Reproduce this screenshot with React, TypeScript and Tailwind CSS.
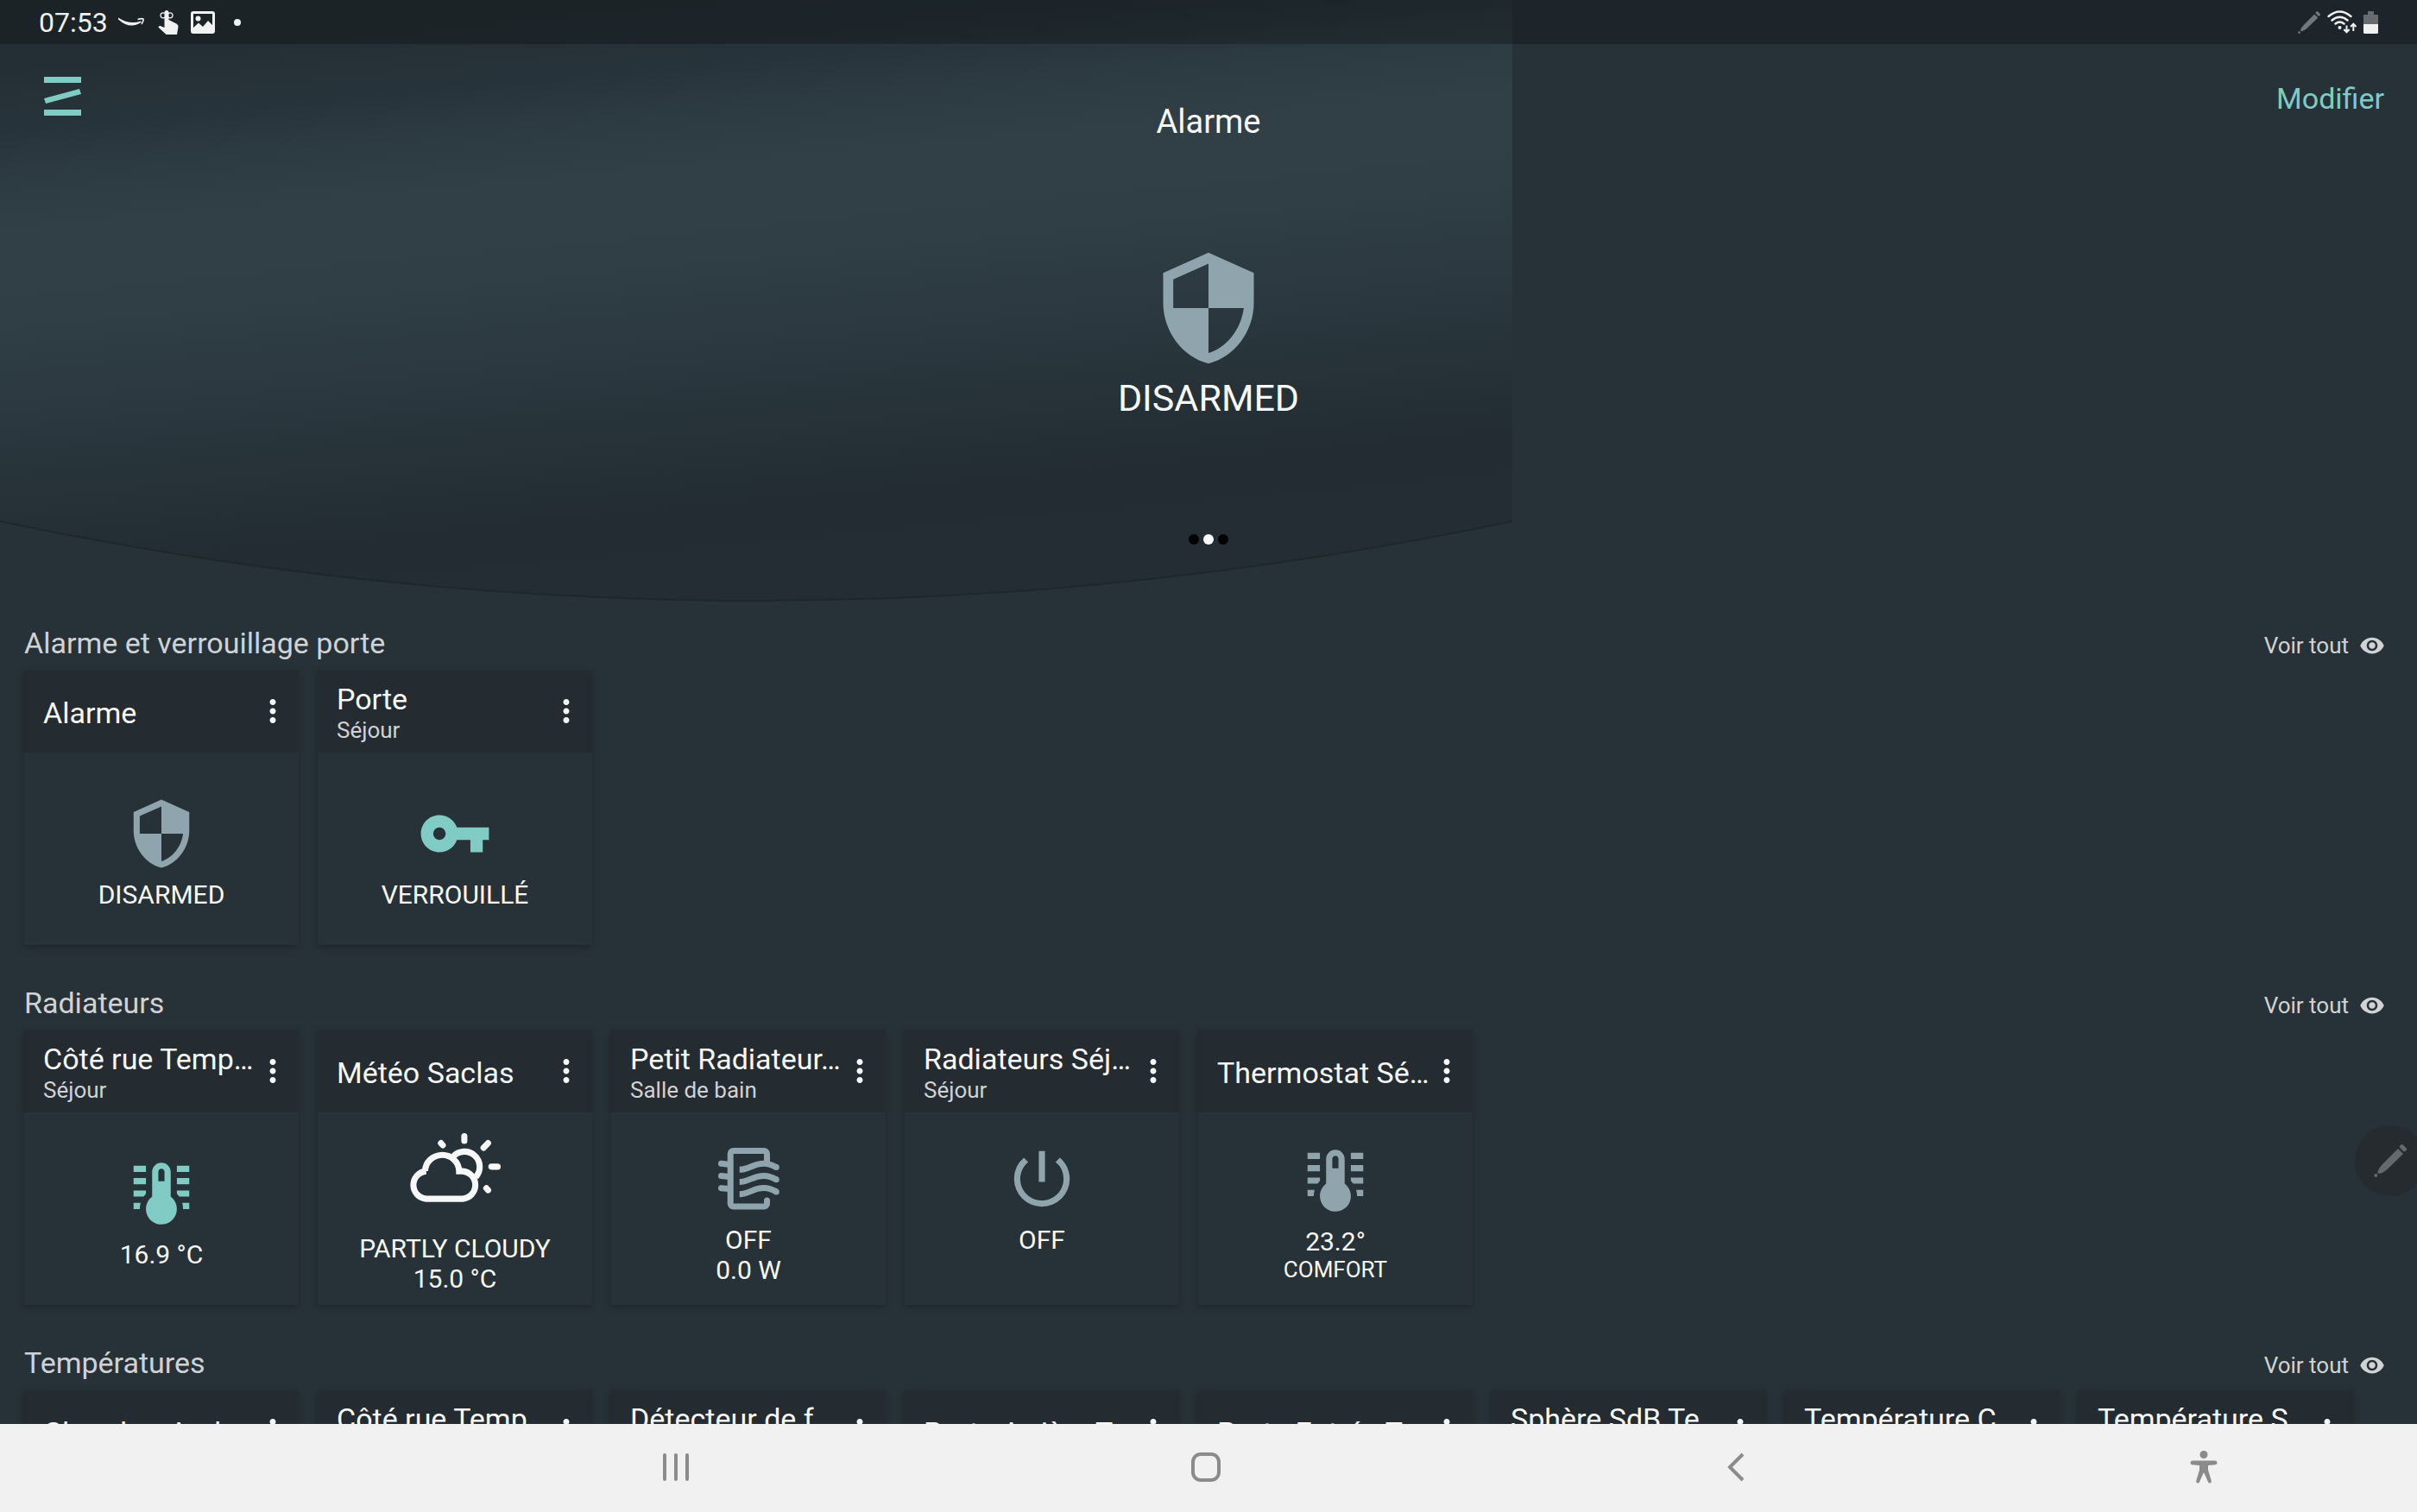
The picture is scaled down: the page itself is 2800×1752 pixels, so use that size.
import type { ReactNode } from "react";
import {
  MdMoreVert,
  MdPowerSettingsNew,
  MdSecurity,
  MdVisibility,
  MdVpnKey,
} from "react-icons/md";

type Tile = {
  title: string;
  room?: string;
  icon?: ReactNode;
  lines?: string[];
  note?: string;
};

type Group = { name: string; tiles: Tile[] };

function ThermometerLines({ className }: { className: string }) {
  return (
    <svg viewBox="0 0 24 24" fill="currentColor" className={className} aria-hidden="true">
      <path d="M17 3H21V5H17V3M17 7H21V9H17V7M17 11H21V13H17.75L17 12.1V11M21 15V17H19C19 16.31 18.9 15.63 18.71 15H21M7 3V5H3V3H7M7 7V9H3V7H7M7 11V12.1L6.25 13H3V11H7M3 15H5.29C5.1 15.63 5 16.31 5 17H3V15M15 13V5C15 3.34 13.66 2 12 2S9 3.34 9 5V13C6.79 14.66 6.34 17.79 8 20S12.79 22.66 15 21 17.66 16.21 16 14C15.72 13.62 15.38 13.28 15 13M12 4C12.55 4 13 4.45 13 5V8H11V5C11 4.45 11.45 4 12 4Z" />
    </svg>
  );
}

function PartlyCloudy() {
  return (
    <svg
      viewBox="0 2 105 105"
      fill="none"
      stroke="currentColor"
      strokeWidth="7"
      className="size-[106px] text-[#f7f8f8]"
      aria-hidden="true"
    >
      <path d="M19.5 77.4A15.9 15.9 0 0 1 19.5 45.7L18.3 45.7A19.5 18.6 0 0 1 57.3 45.7L61.3 45.7A15.9 15.9 0 0 1 61.3 77.4Z" />
      <path d="M50.4 29A17.4 17.4 0 0 1 76.5 52.3" />
      <path
        strokeLinecap="round"
        d="M63.3 5.5V11M36.5 13.5L38.6 15.9M90.5 13.5L85.4 18.8M94.3 40.5H101.5M88.6 65.2L90.6 67.5"
      />
    </svg>
  );
}

function Heater() {
  return (
    <svg
      viewBox="0 0 86 86"
      fill="none"
      stroke="currentColor"
      strokeWidth="7"
      className="size-[86px] text-[#90a4ae]"
      aria-hidden="true"
    >
      <path d="M64.5 23V14A3.5 3.5 0 0 0 61 10.5H25.7A3.5 3.5 0 0 0 22.2 14V71.5A3.5 3.5 0 0 0 25.7 75H61A3.5 3.5 0 0 0 64.5 71.5V67" />
      <path strokeLinecap="round" d="M64.5 68V71M11.5 25.3L20 26.2M11.5 39.5L20 40.4M11.5 53.7L20 54.6" />
      {[0, 14.2, 28.4].map((dy) => (
        <g key={dy} transform={`translate(0 ${dy})`}>
          <path d="M32.7 32.3C44 32.3 48 25.2 61 25.2C67 25.2 71 27 75.3 29.5" />
          <circle cx="75.3" cy="29.5" r="3.5" fill="currentColor" stroke="none" />
        </g>
      ))}
    </svg>
  );
}

function Pen({ className }: { className: string }) {
  return (
    <svg viewBox="0 0 38 38" fill="currentColor" className={className} aria-hidden="true">
      <path d="M28 5L34 11L16 28.5Q11 33 6.5 34Q4 34 4.5 31.5Q6 27 10.5 22.5Z" />
      <rect x="29.5" y="1.8" width="9" height="4.8" rx="2" transform="rotate(45 34 4.2)" />
      <circle cx="2.3" cy="36" r="2" />
    </svg>
  );
}

const groups: Group[] = [
  {
    name: "Alarme et verrouillage porte",
    tiles: [
      {
        title: "Alarme",
        icon: <MdSecurity className="size-[86px] text-[#90a4ae]" />,
        lines: ["DISARMED"],
      },
      {
        title: "Porte",
        room: "Séjour",
        icon: <MdVpnKey className="size-[86px] text-[#80cbc4]" />,
        lines: ["VERROUILLÉ"],
      },
    ],
  },
  {
    name: "Radiateurs",
    tiles: [
      {
        title: "Côté rue Temp…",
        room: "Séjour",
        icon: <ThermometerLines className="size-[86px] text-[#80cbc4]" />,
        lines: ["16.9 °C"],
      },
      { title: "Météo Saclas", icon: <PartlyCloudy />, lines: ["PARTLY CLOUDY", "15.0 °C"] },
      { title: "Petit Radiateur…", room: "Salle de bain", icon: <Heater />, lines: ["OFF", "0.0 W"] },
      {
        title: "Radiateurs Séj…",
        room: "Séjour",
        icon: <MdPowerSettingsNew className="size-[86px] text-[#90a4ae]" />,
        lines: ["OFF", ""],
      },
      {
        title: "Thermostat Sé…",
        icon: <ThermometerLines className="size-[86px] text-[#90a4ae]" />,
        lines: ["23.2°"],
        note: "COMFORT",
      },
    ],
  },
  {
    name: "Températures",
    tiles: [
      { title: "Chambre And…" },
      { title: "Côté rue Temp…", room: "Séjour" },
      { title: "Détecteur de f…", room: "Séjour" },
      { title: "Porte Arrière T…" },
      { title: "Porte Entrée T…" },
      { title: "Sphère SdB Te…", room: "Salle de bain" },
      { title: "Température C…", room: "Séjour" },
      { title: "Température S…", room: "Séjour" },
    ],
  },
];

function TileCard({ tile }: { tile: Tile }) {
  return (
    <article className="flex h-[319px] w-[318px] shrink-0 flex-col bg-[#273238] shadow-[-1px_3px_8px_rgba(0,0,0,0.25)]">
      <header className="flex h-24 shrink-0 items-center justify-between bg-[#242b31] pr-[9px] pl-[22px]">
        <div className="min-w-0 pt-1">
          <h3 className="text-[34px] leading-[40px] whitespace-nowrap">{tile.title}</h3>
          {tile.room && (
            <p className="text-[26px] leading-[32px] whitespace-nowrap text-[#d0d2d4]">{tile.room}</p>
          )}
        </div>
        <button type="button" aria-label={`Options ${tile.title}`} className="shrink-0">
          <MdMoreVert className="size-[42px]" />
        </button>
      </header>
      <div className="flex flex-1 flex-col items-center justify-center pt-[10px]">
        {tile.icon}
        <div className="mt-[10px] text-center text-[30px] leading-[35px]">
          {tile.lines?.map((line, i) => (
            <p key={i} className="min-h-[35px]">
              {line}
            </p>
          ))}
          {tile.note && <p className="text-[26px] leading-[31px]">{tile.note}</p>}
        </div>
      </div>
    </article>
  );
}

function GroupSection({ group }: { group: Group }) {
  return (
    <section>
      <div className="flex h-[98px] items-end pr-[37px] pb-[10px] pl-7 text-[#d0d2d4]">
        <div className="flex flex-1 items-baseline justify-between">
          <h2 className="text-[34px] leading-[42px]">{group.name}</h2>
          <a href="#" className="flex items-center gap-3 text-[26px] leading-[30px]">
            Voir tout
            <MdVisibility className="size-[30px]" />
          </a>
        </div>
      </div>
      <div className="flex gap-[22px] pl-7">
        {group.tiles.map((tile) => (
          <TileCard key={tile.title} tile={tile} />
        ))}
      </div>
    </section>
  );
}

function HeroBackdrop() {
  return (
    <svg viewBox="0 0 1752 700" className="absolute top-0 left-0 w-[1752px]" aria-hidden="true">
      <defs>
        <linearGradient id="sheen" gradientUnits="userSpaceOnUse" x1="876" y1="0" x2="936" y2="640">
          <stop offset="0" stopColor="#242f35" />
          <stop offset="0.1" stopColor="#27333a" />
          <stop offset="0.2" stopColor="#2d3b42" />
          <stop offset="0.3" stopColor="#313f46" />
          <stop offset="0.45" stopColor="#303e45" />
          <stop offset="0.65" stopColor="#2a373e" />
          <stop offset="0.77" stopColor="#263238" />
          <stop offset="0.92" stopColor="#222c32" />
          <stop offset="1" stopColor="#232d33" />
        </linearGradient>
      </defs>
      <path d="M0 0H1752V604Q876 788 0 604Z" fill="url(#sheen)" />
      <path d="M0 604Q876 788 1752 604" fill="none" stroke="#1e272c" strokeWidth="2" />
    </svg>
  );
}

function StatusBar() {
  return (
    <div className="absolute inset-x-0 top-0 flex h-[51px] items-center justify-between bg-black/25 px-[45px] text-[#f1f1f1]">
      <div className="flex items-center">
        <time className="text-[32px] leading-[38px]">07:53</time>
        <svg viewBox="0 0 30 12" fill="currentColor" className="ml-3 h-3 w-[30px]" aria-hidden="true">
          <path d="M0 0.5Q13 9 26 4.5L27 5.5Q14 15 0 2.5Z" />
          <path d="M22.5 2.5Q27 1 29 2Q29.5 4.5 27 8" fill="none" stroke="currentColor" strokeWidth="1.6" />
        </svg>
        <svg viewBox="0 0 24 28" fill="currentColor" className="ml-4 h-7 w-6" aria-hidden="true">
          <path d="M7.5 2.5A2.5 2.5 0 0 1 12.5 2.5V11L21.5 15.5Q24 17 23.5 19L22 28H9.5L0.3 19.5L2 17.8L7.5 20Z" />
          <circle cx="6" cy="5.8" r="3" fill="none" stroke="currentColor" strokeWidth="1.3" />
          <circle cx="14" cy="5.8" r="3" fill="none" stroke="currentColor" strokeWidth="1.3" />
        </svg>
        <svg viewBox="0 0 28 26" className="ml-[14px] h-[26px] w-7" aria-hidden="true">
          <rect x="1.5" y="1.5" width="25" height="23" rx="1.5" fill="none" stroke="currentColor" strokeWidth="3" />
          <circle cx="8.5" cy="8.5" r="3" fill="currentColor" />
          <path d="M2 20L9 13.5L14 18L20 11L26 17V25H2Z" fill="currentColor" />
        </svg>
        <span className="ml-[22px] size-2 rounded-full bg-[#f1f1f1]" />
      </div>
      <div className="flex items-center">
        <Pen className="size-[26px] text-[#737779]" />
        <svg viewBox="0 0 34 27" fill="none" stroke="currentColor" className="ml-2 h-[27px] w-[34px]" aria-hidden="true">
          <path d="M1.5 7Q14.5 -4 27.5 7M5.5 11.5Q14.5 4 23.5 11.5M9.5 15.5Q14.5 11.5 19.5 15.5" strokeWidth="2.4" strokeLinecap="round" />
          <circle cx="14.5" cy="20" r="2" fill="currentColor" stroke="none" />
          <path d="M22.5 17.5V25M19.3 22L22.5 25.3L25.7 22M30.3 24V16M27.1 19L30.3 15.7L33.5 19" strokeWidth="2" />
        </svg>
        <svg viewBox="0 0 17 26" className="ml-2 h-[26px] w-[17px]" aria-hidden="true">
          <path d="M5 0H12V4H17V15H0V4H5Z" fill="#686c6e" />
          <path d="M0 15H17V24.5Q17 26 15.5 26H1.5Q0 26 0 24.5Z" fill="currentColor" />
        </svg>
      </div>
    </div>
  );
}

function Hero() {
  return (
    <div className="relative grid h-[678px] grid-cols-3 items-start pt-[51px]">
      <button type="button" aria-label="Menu" className="mt-[38px] ml-[51px] justify-self-start">
        <svg viewBox="0 0 43 45" fill="#80cbc4" className="h-[45px] w-[43px]">
          <path d="M0 0H43V7H0ZM0 38H43V45H0ZM0 25L41 14L43 20L2 31Z" />
        </svg>
      </button>
      <div className="mt-[67px] flex flex-col items-center">
        <h1 className="text-[38px] leading-[46px]">Alarme</h1>
        <MdSecurity className="mt-[123px] size-[140px] text-[#90a4ae]" />
        <p className="mt-2 text-[43px] leading-[52px]">DISARMED</p>
        <div className="mt-[132px] flex gap-[5px]">
          <span className="size-3 rounded-full bg-black" />
          <span className="size-3 rounded-full bg-white" />
          <span className="size-3 rounded-full bg-black" />
        </div>
      </div>
      <a href="#" className="mt-[42px] mr-[38px] justify-self-end text-[34px] leading-[42px] text-[#80cbc4]">
        Modifier
      </a>
    </div>
  );
}

function NavBar() {
  return (
    <nav className="grid h-[102px] shrink-0 grid-cols-[476fr_614fr_614fr_614fr_470fr_12fr] items-center justify-items-center bg-[#f1f1f1] pb-0.5 text-[#8b8b8b]">
      <span />
      <button type="button" aria-label="Applications récentes">
        <svg viewBox="0 0 34 34" stroke="currentColor" strokeWidth="4" strokeLinecap="round" className="size-[34px]">
          <path d="M4 3V31M17 3V31M30 3V31" />
        </svg>
      </button>
      <button type="button" aria-label="Accueil">
        <svg viewBox="0 0 34 34" fill="none" stroke="currentColor" strokeWidth="4" className="size-[34px]">
          <rect x="2" y="2" width="30" height="30" rx="9" />
        </svg>
      </button>
      <button type="button" aria-label="Retour">
        <svg viewBox="0 0 34 34" fill="none" stroke="currentColor" strokeWidth="4" className="size-[34px]">
          <path d="M25 2L10 17L25 32" />
        </svg>
      </button>
      <button type="button" aria-label="Accessibilité">
        <svg viewBox="0 0 32 38" fill="currentColor" className="h-[38px] w-8">
          <circle cx="16" cy="4.5" r="4.5" />
          <path d="M2.5 11.5H29.5Q31.5 12 31.5 14Q31.5 16 29.5 16.2L21 17V22L24.8 35Q25 37 23.5 37.5Q21.8 38 21 36.3L16.5 26H15.5L11 36.3Q10.2 38 8.5 37.5Q7 37 7.2 35L11 22V17L2.5 16.2Q0.5 16 0.5 14Q0.5 12 2.5 11.5Z" />
        </svg>
      </button>
    </nav>
  );
}

export default function App() {
  return (
    <div className="flex h-screen flex-col bg-[#273238] font-[Roboto,sans-serif] text-[#f7f8f8]">
      <main className="relative min-h-0 flex-1 overflow-hidden">
        <HeroBackdrop />
        <Hero />
        <div className="relative">
          {groups.map((group) => (
            <GroupSection key={group.name} group={group} />
          ))}
        </div>
        <StatusBar />
        <button
          type="button"
          aria-label="Stylet"
          className="absolute top-[1304px] -right-[10px] flex size-[82px] items-center justify-center rounded-full bg-[#252b2e] text-[#626a6d]"
        >
          <Pen className="size-[38px]" />
        </button>
      </main>
      <NavBar />
    </div>
  );
}
